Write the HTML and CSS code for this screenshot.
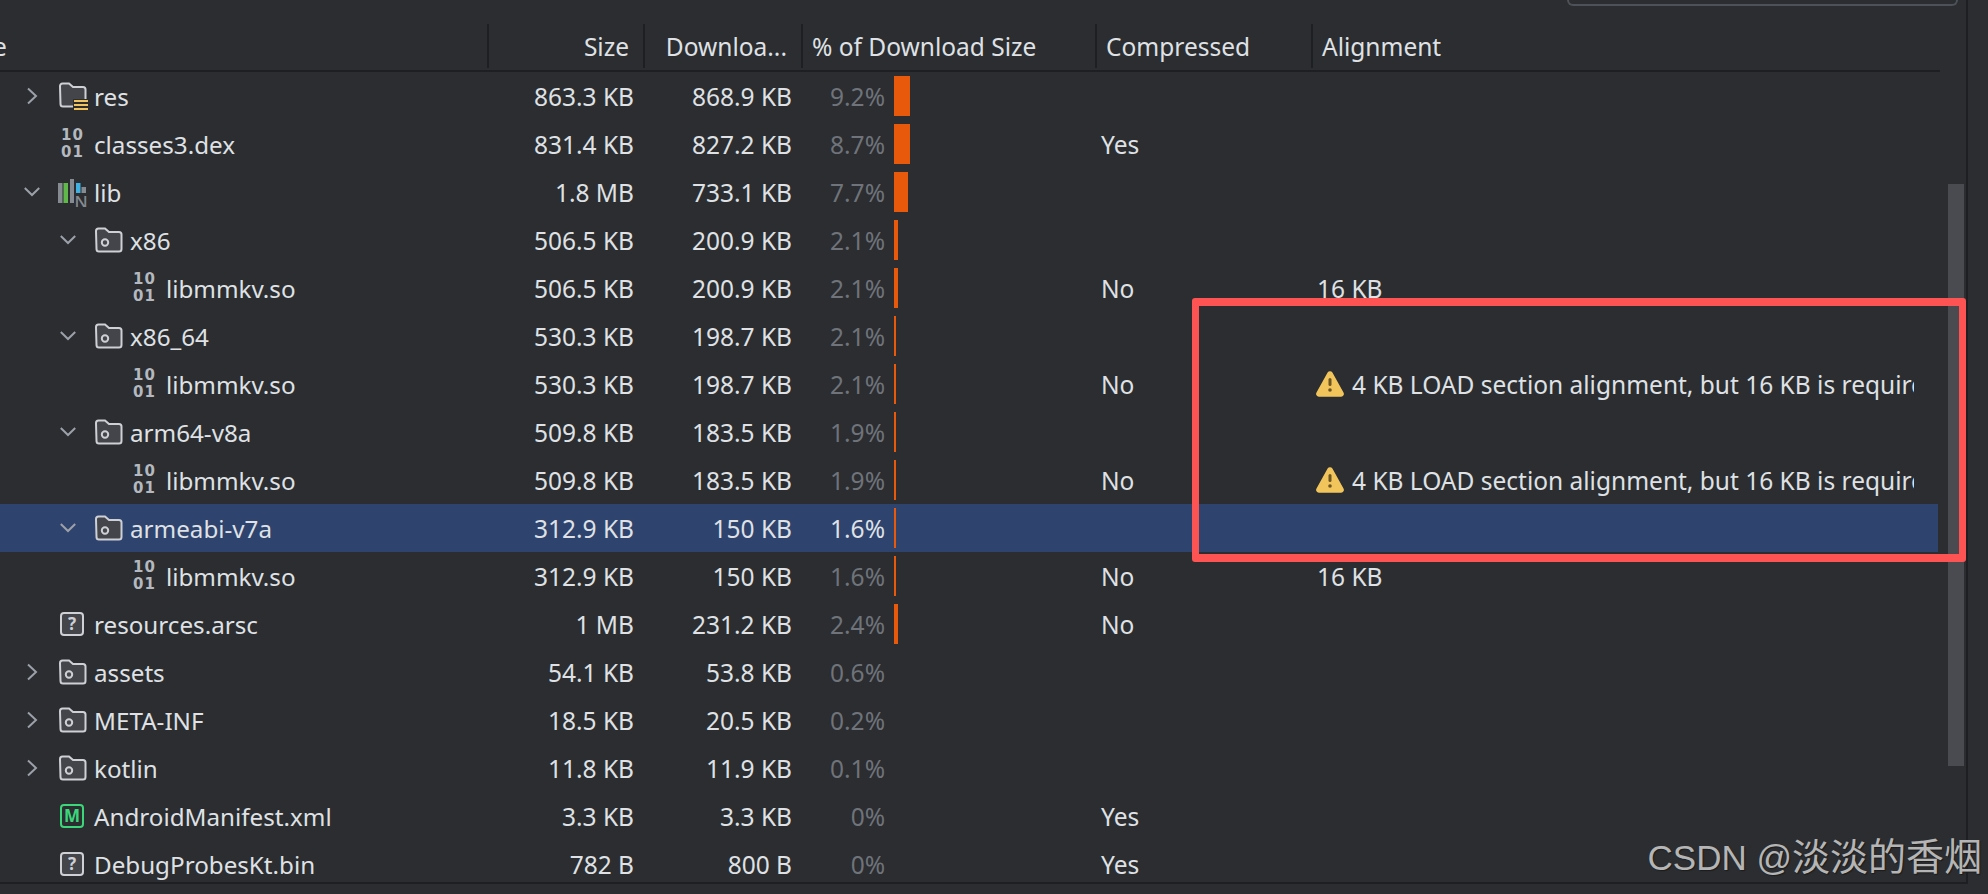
FILE: index.html
```html
<!DOCTYPE html>
<html lang="en">
<head>
    <meta charset="UTF-8">
    <title>APK Analyzer</title>
    <link rel="stylesheet" href="styles.css">
</head>
<body>
    <svg class="defs" width="0" height="0">
        <symbol id="right" viewBox="0 0 16 20"><path d="M4 2.5 L12 10 L4 17.5" fill="none" stroke="#9da0a8" stroke-width="2"/></symbol>
        <symbol id="down" viewBox="0 0 16 20"><path d="M0.8 6 L8 13 L15.2 6" fill="none" stroke="#9da0a8" stroke-width="2"/></symbol>
        <symbol id="folder" viewBox="0 0 30 30"><path d="M2 6 a2.5 2.5 0 0 1 2.5-2.5 h6.5 l4 3.5 h10 a2.5 2.5 0 0 1 2.5 2.5 v14.5 a2.5 2.5 0 0 1-2.5 2.5 h-20 a2.5 2.5 0 0 1-2.5-2.5 Z" fill="#43454a" stroke="#ced0d6" stroke-width="2"/><circle cx="11" cy="17.5" r="3.2" fill="none" stroke="#ced0d6" stroke-width="2"/></symbol>
        <symbol id="resfolder" viewBox="0 0 30 30"><path d="M2 5 a2.5 2.5 0 0 1 2.5-2.5 h6.5 l4 3.5 h10 a2.5 2.5 0 0 1 2.5 2.5 v14.5 a2.5 2.5 0 0 1-2.5 2.5 h-20 a2.5 2.5 0 0 1-2.5-2.5 Z" fill="#43454a" stroke="#ced0d6" stroke-width="2"/><rect x="15" y="18" width="15" height="12" fill="#2b2d30"/><path d="M16 20 h14 M16 24 h14 M16 28 h14" stroke="#f2c55c" stroke-width="2"/></symbol>
        <symbol id="warn" viewBox="0 0 28 26"><path d="M11.600 1.500 a2.800 2.800 0 0 1 4.800 0 L27.500 21.500 a2.800 2.800 0 0 1-2.400 4.200 H2.900 a2.800 2.800 0 0 1-2.400-4.200 Z" fill="#f2c55c"/><rect x="12.500" y="7" width="3" height="8" rx="1.500" fill="#6b5522"/><circle cx="14" cy="19" r="1.800" fill="#6b5522"/></symbol>
    </svg>

    <div class="main">
        <div class="topbar"><div class="search"></div></div>
        <div class="content">
            <div class="table">
                <div class="head">
                    <div class="hcell first"><span class="cut">e</span></div>
                    <div class="hcell right">Size</div>
                    <div class="hcell right">Downloa...</div>
                    <div class="hcell">% of Download Size</div>
                    <div class="hcell">Compressed</div>
                    <div class="hcell">Alignment</div>
                </div>
                <div class="rows">
                    <div class="row">
                        <div class="name"><svg class="arrow"><use href="#right"/></svg><svg class="icon"><use href="#resfolder"/></svg>res</div>
                        <div class="num">863.3 KB</div><div class="num">868.9 KB</div>
                        <div class="pct"><span class="val">9.2%</span><i class="bar w16"></i></div>
                        <div class="txt"></div><div class="txt"></div>
                    </div>
                    <div class="row">
                        <div class="name"><span class="noarrow"></span><span class="icon binary">10<br>01</span>classes3.dex</div>
                        <div class="num">831.4 KB</div><div class="num">827.2 KB</div>
                        <div class="pct"><span class="val">8.7%</span><i class="bar w16"></i></div>
                        <div class="txt">Yes</div><div class="txt"></div>
                    </div>
                    <div class="row">
                        <div class="name"><svg class="arrow"><use href="#down"/></svg><svg class="icon" viewBox="0 0 30 30"><path d="M0 6 h4.500 v20 h-4.500 Z M12 2 h4 v24 h-4 Z M23.500 10 h4.500 v6 h-4.500 Z" fill="#868a91"/><rect x="5.500" y="6" width="4.500" height="20" fill="#5fb849"/><rect x="18" y="6" width="4.500" height="10" fill="#3fb1e3"/><text class="enn" x="16.500" y="31">N</text></svg>lib</div>
                        <div class="num">1.8 MB</div><div class="num">733.1 KB</div>
                        <div class="pct"><span class="val">7.7%</span><i class="bar w14"></i></div>
                        <div class="txt"></div><div class="txt"></div>
                    </div>
                    <div class="row">
                        <div class="name d1"><svg class="arrow"><use href="#down"/></svg><svg class="icon"><use href="#folder"/></svg>x86</div>
                        <div class="num">506.5 KB</div><div class="num">200.9 KB</div>
                        <div class="pct"><span class="val">2.1%</span><i class="bar w4"></i></div>
                        <div class="txt"></div><div class="txt"></div>
                    </div>
                    <div class="row">
                        <div class="name d2"><span class="noarrow"></span><span class="icon binary">10<br>01</span>libmmkv.so</div>
                        <div class="num">506.5 KB</div><div class="num">200.9 KB</div>
                        <div class="pct"><span class="val">2.1%</span><i class="bar w4"></i></div>
                        <div class="txt">No</div><div class="txt">16 KB</div>
                    </div>
                    <div class="row">
                        <div class="name d1"><svg class="arrow"><use href="#down"/></svg><svg class="icon"><use href="#folder"/></svg>x86_64</div>
                        <div class="num">530.3 KB</div><div class="num">198.7 KB</div>
                        <div class="pct"><span class="val">2.1%</span><i class="bar w2"></i></div>
                        <div class="txt"></div><div class="txt"></div>
                    </div>
                    <div class="row">
                        <div class="name d2"><span class="noarrow"></span><span class="icon binary">10<br>01</span>libmmkv.so</div>
                        <div class="num">530.3 KB</div><div class="num">198.7 KB</div>
                        <div class="pct"><span class="val">2.1%</span><i class="bar w2"></i></div>
                        <div class="txt">No</div>
                        <div class="txt warning"><svg class="warn"><use href="#warn"/></svg>4 KB LOAD section alignment, but 16 KB is required</div>
                    </div>
                    <div class="row">
                        <div class="name d1"><svg class="arrow"><use href="#down"/></svg><svg class="icon"><use href="#folder"/></svg>arm64-v8a</div>
                        <div class="num">509.8 KB</div><div class="num">183.5 KB</div>
                        <div class="pct"><span class="val">1.9%</span><i class="bar w2"></i></div>
                        <div class="txt"></div><div class="txt"></div>
                    </div>
                    <div class="row">
                        <div class="name d2"><span class="noarrow"></span><span class="icon binary">10<br>01</span>libmmkv.so</div>
                        <div class="num">509.8 KB</div><div class="num">183.5 KB</div>
                        <div class="pct"><span class="val">1.9%</span><i class="bar w2"></i></div>
                        <div class="txt">No</div>
                        <div class="txt warning"><svg class="warn"><use href="#warn"/></svg>4 KB LOAD section alignment, but 16 KB is required</div>
                    </div>
                    <div class="row selected">
                        <div class="name d1"><svg class="arrow"><use href="#down"/></svg><svg class="icon"><use href="#folder"/></svg>armeabi-v7a</div>
                        <div class="num">312.9 KB</div><div class="num">150 KB</div>
                        <div class="pct"><span class="val">1.6%</span><i class="bar w2"></i></div>
                        <div class="txt"></div><div class="txt"></div>
                    </div>
                    <div class="row">
                        <div class="name d2"><span class="noarrow"></span><span class="icon binary">10<br>01</span>libmmkv.so</div>
                        <div class="num">312.9 KB</div><div class="num">150 KB</div>
                        <div class="pct"><span class="val">1.6%</span><i class="bar w2"></i></div>
                        <div class="txt">No</div><div class="txt">16 KB</div>
                    </div>
                    <div class="row">
                        <div class="name"><span class="noarrow"></span><span class="badge unknown">?</span>resources.arsc</div>
                        <div class="num">1 MB</div><div class="num">231.2 KB</div>
                        <div class="pct"><span class="val">2.4%</span><i class="bar w4"></i></div>
                        <div class="txt">No</div><div class="txt"></div>
                    </div>
                    <div class="row">
                        <div class="name"><svg class="arrow"><use href="#right"/></svg><svg class="icon"><use href="#folder"/></svg>assets</div>
                        <div class="num">54.1 KB</div><div class="num">53.8 KB</div>
                        <div class="pct"><span class="val">0.6%</span></div>
                        <div class="txt"></div><div class="txt"></div>
                    </div>
                    <div class="row">
                        <div class="name"><svg class="arrow"><use href="#right"/></svg><svg class="icon"><use href="#folder"/></svg>META-INF</div>
                        <div class="num">18.5 KB</div><div class="num">20.5 KB</div>
                        <div class="pct"><span class="val">0.2%</span></div>
                        <div class="txt"></div><div class="txt"></div>
                    </div>
                    <div class="row">
                        <div class="name"><svg class="arrow"><use href="#right"/></svg><svg class="icon"><use href="#folder"/></svg>kotlin</div>
                        <div class="num">11.8 KB</div><div class="num">11.9 KB</div>
                        <div class="pct"><span class="val">0.1%</span></div>
                        <div class="txt"></div><div class="txt"></div>
                    </div>
                    <div class="row">
                        <div class="name"><span class="noarrow"></span><span class="badge manifest">M</span>AndroidManifest.xml</div>
                        <div class="num">3.3 KB</div><div class="num">3.3 KB</div>
                        <div class="pct"><span class="val">0%</span></div>
                        <div class="txt">Yes</div><div class="txt"></div>
                    </div>
                    <div class="row">
                        <div class="name"><span class="noarrow"></span><span class="badge unknown">?</span>DebugProbesKt.bin</div>
                        <div class="num">782 B</div><div class="num">800 B</div>
                        <div class="pct"><span class="val">0%</span></div>
                        <div class="txt">Yes</div><div class="txt"></div>
                    </div>
                </div>
            </div>
            <div class="track"><div class="thumb"></div></div>
        </div>
    </div>

    <div class="redbox"></div>
    <div class="watermark">CSDN @<span class="cjk">淡淡的香烟</span></div>
</body>
</html>
```

FILE: styles.css
```css
body{
    margin: 0;
    width: 1988px;
    height: 894px;
    overflow: hidden;
    position: relative;
    background-color: #2b2d30;
    color: #dfe1e5;
    font-family: "Noto Sans", "Open Sans", sans-serif;
    font-size: 24.5px;
}
.defs{
    position: absolute;
}
.main{
    width: 1966px;
    height: 882px;
    border-right: 2px solid #1e1f22;
    border-bottom: 2px solid #1e1f22;
    overflow: hidden;
}
.topbar{
    height: 24px;
    display: flex;
    justify-content: flex-end;
    padding-right: 8px;
}
.search{
    width: 387px;
    height: 4px;
    border: 2px solid #4e5157;
    border-top: none;
    border-radius: 0 0 8px 8px;
}
.content{
    display: flex;
}
.table{
    width: 1940px;
}
.track{
    padding: 160px 2px 0 8px;
}
.thumb{
    width: 16px;
    height: 582px;
    background-color: #4a4b50;
}

/* header */
.head{
    display: grid;
    grid-template-columns: 487px 156px 158px 294px 216px 1fr;
    grid-template-rows: 44px;
    height: 46px;
    border-bottom: 2px solid #1e1f22;
}
.hcell{
    height: 44px;
    line-height: 46px;
    border-left: 2px solid #1e1f22;
    padding-left: 9px;
    white-space: nowrap;
}
.hcell.first{
    border-left: none;
    padding-left: 0;
    overflow: hidden;
}
.hcell.right{
    text-align: right;
    padding: 0 14px 0 0;
}
.cut{
    margin-left: -7px;
}

/* rows */
.row{
    display: grid;
    grid-template-columns: 487px 156px 158px 294px 216px 1fr;
    grid-template-rows: 48px;
    height: 48px;
    line-height: 50px;
    white-space: nowrap;
}
.row.selected{
    background-color: #2e436e;
    margin-right: 2px;
}
.name{
    display: flex;
    align-items: center;
    box-sizing: border-box;
    padding-top: 2px;
    padding-left: 24px;
    font-size: 24.2px;
    line-height: 48px;
}
.name.d1{
    padding-left: 60px;
}
.name.d2{
    padding-left: 96px;
}
.arrow{
    width: 16px;
    height: 20px;
    margin: 0 18px 2px 0;
    flex: none;
}
.noarrow{
    width: 34px;
    flex: none;
}
.icon{
    width: 30px;
    height: 30px;
    margin: 0 6px 2px 0;
    flex: none;
}
.icon.binary{
    height: 34px;
    padding-left: 3px;
    width: 27px;
    font-family: "DejaVu Sans", sans-serif;
    font-weight: 700;
    font-size: 15px;
    line-height: 17px;
    letter-spacing: 1px;
    color: #b4b8bf;
}
.badge{
    width: 20px;
    height: 20px;
    margin: 0 10px 2px 2px;
    flex: none;
    border: 2px solid #ced0d6;
    border-radius: 4px;
    text-align: center;
    font-weight: 700;
    font-size: 17px;
    line-height: 20px;
}
.badge.unknown{
    background-color: #43454a;
    color: #ced0d6;
}
.badge.manifest{
    border-color: #3bd67a;
    color: #3bd67a;
}
.enn{
    font-weight: 500;
    font-size: 17px;
    fill: #868a91;
}
.num{
    text-align: right;
    padding-right: 9px;
}
.pct{
    display: flex;
    align-items: center;
}
.val{
    width: 84px;
    text-align: right;
    color: #6f737a;
    margin-right: 9px;
    line-height: 48px;
    padding-top: 2px;
}
.selected .val{
    color: #dfe1e5;
}
.bar{
    height: 40px;
    background-color: #e8590c;
}
.w16{ width: 16px; }
.w14{ width: 14px; }
.w4{ width: 4px; }
.w2{ width: 2px; }
.txt{
    padding-left: 6px;
}
.warning{
    display: flex;
    align-items: center;
    box-sizing: border-box;
    padding-top: 2px;
    padding-left: 5px;
    margin-right: 26px;
    line-height: 48px;
    overflow: hidden;
}
.warn{
    width: 28px;
    height: 26px;
    margin: 0 8px 2px 0;
    flex: none;
}

/* overlays */
.redbox{
    position: absolute;
    left: 1192px;
    top: 298px;
    width: 760px;
    height: 248px;
    border: 8px solid #fd5353;
    border-left-width: 7px;
    border-right-width: 7px;
    border-radius: 3px;
}
.watermark{
    position: absolute;
    right: 6px;
    top: 835px;
    line-height: 44px;
    font-family: "Liberation Sans", "Noto Sans CJK SC", sans-serif;
    font-size: 35px;
    color: #b5b5b5;
    text-shadow: 1px 1px 1px #1c1c1c;
    white-space: nowrap;
}
.cjk{
    font-size: 38px;
}
```
